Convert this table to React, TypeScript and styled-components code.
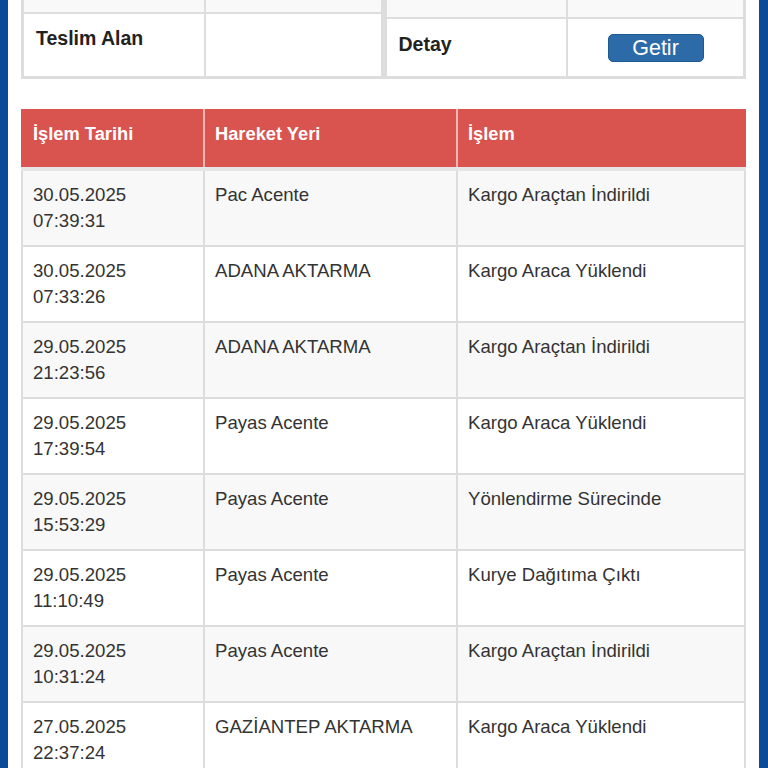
import React from "react";
import styled, { createGlobalStyle } from "styled-components";

const Global = createGlobalStyle`
  html, body { margin: 0; padding: 0; background: #ffffff; }
  body { font-family: "Liberation Sans", Arial, Helvetica, sans-serif; color: #333333; }
`;

const Page = styled.div`
  min-height: 768px;
  background: #ffffff;
  border-left: 8px solid #0b4a99;
  border-right: 9px solid #0b4a99;
  padding: 0 13px;
`;

const TopRow = styled.div`
  display: flex;
`;

const InfoTable = styled.table`
  flex: 1;
  border-collapse: collapse;
  table-layout: fixed;
  border: 3px solid #dddddd;
  border-top: none;
`;

const InfoCell = styled.td<{ $h: number; $first?: boolean; $center?: boolean; $grey?: boolean }>`
  height: ${(p) => p.$h}px;
  padding: ${(p) => (p.$first ? "0 12px" : "11px 12px")};
  border: 2px solid #dddddd;
  border-top: ${(p) => (p.$first ? "none" : "2px solid #dddddd")};
  background: ${(p) => (p.$grey ? "#f9f9f9" : "#ffffff")};
  vertical-align: ${(p) => (p.$center ? "middle" : "top")};
  text-align: ${(p) => (p.$center ? "center" : "left")};
  box-sizing: border-box;
`;

const Label = styled.span<{ $drop?: number }>`
  display: inline-block;
  margin-top: ${(p) => p.$drop ?? 0}px;
  font-weight: bold;
  font-size: 19.5px;
  line-height: 26px;
  color: #222222;
`;

const Button = styled.button`
  width: 96px;
  height: 28px;
  padding: 0;
  margin-top: 2px;
  border: 1px solid #1f5b92;
  border-radius: 5px;
  background: #2c6ba8;
  color: #ffffff;
  font-family: "Liberation Sans", Arial, sans-serif;
  font-size: 21.5px;
  line-height: 26px;
`;

const History = styled.table`
  width: 100%;
  margin-top: 30px;
  border-collapse: collapse;
  table-layout: fixed;
  border: 2px solid #dddddd;
  border-top: none;
`;

const HeadCell = styled.th`
  background: #d9534f;
  color: #ffffff;
  font-weight: bold;
  font-size: 18.3px;
  line-height: 26px;
  text-align: left;
  padding: 12px 10px 20px;
  border-left: 2px solid #f0b7b5;
  border-right: 2px solid #f0b7b5;
  border-bottom: 4px solid #e6e6e6;
  vertical-align: top;
  &:first-child { border-left: 2px solid #d9534f; }
  &:last-child { border-right: 2px solid #d9534f; }
`;

const Row = styled.tr<{ $odd: boolean }>`
  background: ${(p) => (p.$odd ? "#f8f8f8" : "#ffffff")};
`;

const Cell = styled.td`
  padding: 11px 10px;
  font-size: 18.6px;
  line-height: 26px;
  color: #333333;
  vertical-align: top;
  border: 2px solid #dddddd;
  height: 52px;
`;

const rows: [string, string, string, string][] = [
  ["30.05.2025", "07:39:31", "Pac Acente", "Kargo Araçtan İndirildi"],
  ["30.05.2025", "07:33:26", "ADANA AKTARMA", "Kargo Araca Yüklendi"],
  ["29.05.2025", "21:23:56", "ADANA AKTARMA", "Kargo Araçtan İndirildi"],
  ["29.05.2025", "17:39:54", "Payas Acente", "Kargo Araca Yüklendi"],
  ["29.05.2025", "15:53:29", "Payas Acente", "Yönlendirme Sürecinde"],
  ["29.05.2025", "11:10:49", "Payas Acente", "Kurye Dağıtıma Çıktı"],
  ["29.05.2025", "10:31:24", "Payas Acente", "Kargo Araçtan İndirildi"],
  ["27.05.2025", "22:37:24", "GAZİANTEP AKTARMA", "Kargo Araca Yüklendi"],
];

export default function App() {
  return (
    <>
      <Global />
      <Page>
        <TopRow>
          <InfoTable>
            <colgroup>
              <col style={{ width: 182 }} />
              <col />
            </colgroup>
            <tbody>
              <tr>
                <InfoCell $h={13} $first $grey />
                <InfoCell $h={13} $first $grey />
              </tr>
              <tr>
                <InfoCell $h={64}>
                  <Label>Teslim Alan</Label>
                </InfoCell>
                <InfoCell $h={64} />
              </tr>
            </tbody>
          </InfoTable>
          <InfoTable>
            <colgroup>
              <col style={{ width: 182 }} />
              <col />
            </colgroup>
            <tbody>
              <tr>
                <InfoCell $h={18} $first $grey />
                <InfoCell $h={18} $first $grey />
              </tr>
              <tr>
                <InfoCell $h={59}>
                  <Label $drop={1}>Detay</Label>
                </InfoCell>
                <InfoCell $h={59} $center>
                  <Button>Getir</Button>
                </InfoCell>
              </tr>
            </tbody>
          </InfoTable>
        </TopRow>

        <History>
          <colgroup>
            <col style={{ width: 182 }} />
            <col style={{ width: 253 }} />
            <col />
          </colgroup>
          <thead>
            <tr>
              <HeadCell>İşlem Tarihi</HeadCell>
              <HeadCell>Hareket Yeri</HeadCell>
              <HeadCell>İşlem</HeadCell>
            </tr>
          </thead>
          <tbody>
            {rows.map((r, i) => (
              <Row key={i} $odd={i % 2 === 0}>
                <Cell>
                  {r[0]}
                  <br />
                  {r[1]}
                </Cell>
                <Cell>{r[2]}</Cell>
                <Cell>{r[3]}</Cell>
              </Row>
            ))}
          </tbody>
        </History>
      </Page>
    </>
  );
}
